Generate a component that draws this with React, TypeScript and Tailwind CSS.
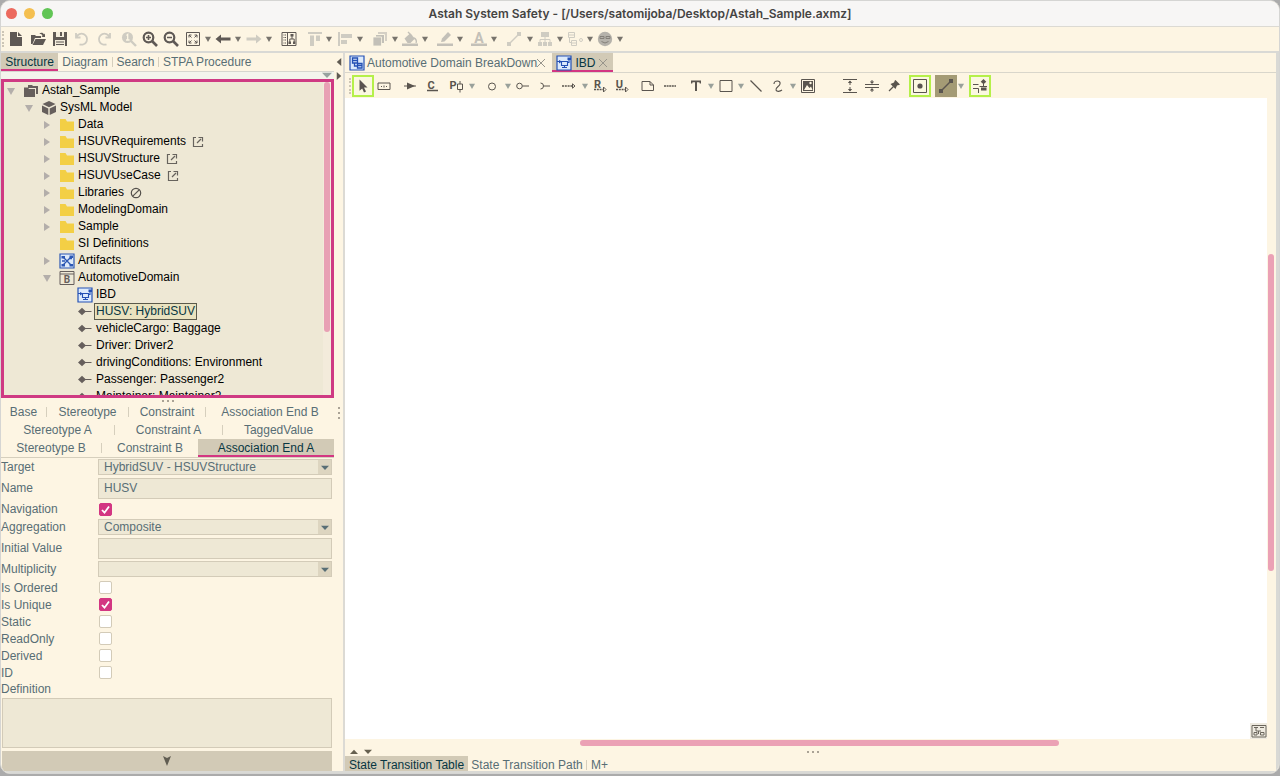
import React from "react";

type IconName = keyof typeof shapes;

interface Tool {
  icon: IconName;
  label: string;
  cls?: string;
  menu?: boolean;
}

interface TreeNode {
  label: string;
  icon: IconName;
  depth: number;
  arrow?: "open" | "closed";
  mark?: "external" | "blocked";
  selected?: boolean;
}

const letter = {
  fontFamily: "Roboto, sans-serif",
  fontWeight: 700,
  fill: "currentColor",
  textAnchor: "middle" as const,
};

const line = { fill: "none", stroke: "currentColor" };

const shapes = {
  newFile: (
    <>
      <path d="M2 1h7v5h5v9H2z" fill="currentColor" />
      <path d="M10 1l4 4h-4z" fill="currentColor" />
    </>
  ),
  open: (
    <>
      <path d="M1 13V4h4l1 1h5v2H5L2.500 13z" fill="currentColor" />
      <path d="M5.500 8H16l-3 6H2.500z" fill="currentColor" />
      <path d="M9 3c2-2 4-1.500 5 .5l1-1V6h-3.500l1-1C12 3.500 10.500 2.500 9 3z" fill="currentColor" />
    </>
  ),
  save: (
    <>
      <path d="M1 1h14v14H1z" fill="currentColor" />
      <path d="M4 1h8v5H4zM3 9h10v6H3z" fill="#f3ecdc" />
      <path d="M8 1h2v4H8zM4 10.500h8v1H4zM4 13h8v1H4z" fill="currentColor" />
    </>
  ),
  undo: <path d="M2 2v4.500h4.500M2.500 6a5.500 5.500 0 1 1 3 7.300" {...line} strokeWidth="1.800" />,
  redo: <path d="M14 2v4.500H9.500M13.500 6a5.500 5.500 0 1 0-3 7.300" {...line} strokeWidth="1.800" />,
  zoomOne: (
    <>
      <circle cx="6.500" cy="6.500" r="5.500" fill="currentColor" />
      <path d="M10 10l5 5" {...line} strokeWidth="2.400" />
      <path d="M5.500 4.500l1.200-1v5.500M5 9h3.500" fill="none" stroke="#fdf6e3" strokeWidth="1.300" />
    </>
  ),
  zoomIn: (
    <>
      <circle cx="6.500" cy="6.500" r="4.800" {...line} strokeWidth="2.200" />
      <path d="M10 10l5 5" {...line} strokeWidth="2.600" />
      <path d="M6.500 4v5M4 6.500h5" {...line} strokeWidth="1.600" />
    </>
  ),
  zoomOut: (
    <>
      <circle cx="6.500" cy="6.500" r="4.800" {...line} strokeWidth="2.200" />
      <path d="M10 10l5 5" {...line} strokeWidth="2.600" />
      <path d="M4 6.500h5" {...line} strokeWidth="1.600" />
    </>
  ),
  fit: (
    <>
      <path d="M1.500 1.500h13v13h-13z" {...line} />
      <path d="M4 6.500V4h2.500M9.500 4H12v2.500M12 9.500V12H9.500M6.500 12H4V9.500M4 4l2.500 2.500M12 4L9.500 6.500M12 12L9.500 9.500M4 12l2.500-2.500" {...line} />
    </>
  ),
  back: <path d="M.5 8L6 3.500v3h9.500v3H6v3z" fill="currentColor" />,
  forward: <path d="M15.500 8L10 3.500v3H.5v3H10v3z" fill="currentColor" />,
  structure: (
    <>
      <path d="M1 1.500h14v13H1zM6.500 1.500v13" {...line} />
      <path d="M2.500 4h2.500M2.500 6.500h2.500M2.500 9h2.500M2.500 12h2.500" {...line} strokeDasharray="1 .5" />
      <path d="M11 5v3M8.800 11V8h4.400v3" {...line} />
      <path d="M9.500 3h3v2.500h-3zM7.500 10.500H10V13H7.500zM12 10.500h2.300V13H12z" fill="currentColor" />
    </>
  ),
  alignTop: <path d="M1 1h14v2H1zM3 4.500h4v10.500H3zM9 4.500h4V10H9z" fill="currentColor" />,
  alignLeft: <path d="M1 1h2v14H1zM4 3h11v4H4zM4 9h6v4H4z" fill="currentColor" />,
  stack: (
    <>
      <path d="M6 1h9v9H6z" fill="currentColor" opacity=".7" />
      <path d="M3.500 3.500h9v9h-9z" fill="currentColor" stroke="#fdf6e3" />
      <path d="M1 6h8.500v9H1z" fill="currentColor" stroke="#fdf6e3" strokeWidth=".8" />
    </>
  ),
  fill: (
    <>
      <path d="M2.500 7.500l5.500-5 5 5-4.500 4.500H5.500z" fill="currentColor" />
      <path d="M6 1l4 4M12 7c2 1 3 3 2 5" {...line} strokeWidth="1.400" />
      <path d="M0 12.500h16V15H0z" fill="currentColor" />
    </>
  ),
  pen: (
    <>
      <path d="M4 11l1-3.500L11 1l3 3-6.500 6.500z" fill="currentColor" />
      <path d="M0 12.500h16V15H0z" fill="currentColor" />
    </>
  ),
  fontColor: (
    <>
      <text x="8" y="11.500" fontSize="14" {...letter}>A</text>
      <path d="M0 12.500h16V15H0z" fill="currentColor" />
    </>
  ),
  lineStyle: (
    <>
      <path d="M3 13L13 3" {...line} strokeWidth="1.400" />
      <path d="M1 11h4v4H1zM11 1h4v4h-4z" fill="currentColor" />
    </>
  ),
  orgTree: (
    <>
      <path d="M8 6v3M3 11V8.500h10V11M8 8v3" {...line} />
      <path d="M4 1h8v5H4zM1 11h4v4H1zM6 11h4v4H6zM11 11h4v4h-4z" fill="currentColor" />
    </>
  ),
  compartments: (
    <>
      <path d="M1.500 1.500h6v5h-6zM1.500 4h6M4.500 9.500h5v5h-5zM4.500 12h5M2.500 6.500v5h2" {...line} />
      <circle cx="14" cy="9" r="1.500" {...line} />
    </>
  ),
  smile: (
    <>
      <circle cx="8" cy="8" r="7.200" fill="currentColor" />
      <path d="M3 5.500h4v2H3zM9 5.500h4v2H9zM4.500 10.500q3.500 3 7 0" fill="none" stroke="#84807a" />
    </>
  ),
  pointer: <path d="M4.500 1.500l8 8H9l2 4-2 1-1.800-4-2.700 2.300z" fill="currentColor" />,
  block: <path d="M2 5h12v6.500H2zM5.500 8v1M8 7.500v2M10.500 8v1" {...line} />,
  flow: (
    <>
      <path d="M2 8h12" {...line} />
      <path d="M5 4.500L13 8l-8 3.500z" fill="currentColor" />
    </>
  ),
  constraint: (
    <>
      <text x="7" y="10.500" fontSize="11" {...letter}>C</text>
      <path d="M3 12.500h11" {...line} strokeWidth="1.300" />
    </>
  ),
  port: (
    <>
      <text x="4" y="10.500" fontSize="11" {...letter}>P</text>
      <path d="M8.500 6h5v5.500h-5zM11 3v3M11 11.500v3" {...line} />
    </>
  ),
  circle: <circle cx="8" cy="8.500" r="3.500" {...line} />,
  provided: (
    <>
      <circle cx="4.500" cy="8" r="2.800" {...line} />
      <path d="M7.500 8H14" {...line} />
    </>
  ),
  required: <path d="M3.500 5q3 0 3 3t-3 3M6.500 8H13" {...line} />,
  dashArrow: (
    <>
      <path d="M1 8h10" {...line} strokeWidth="1.400" strokeDasharray="2 .8" />
      <path d="M11.500 5.800L14 8l-2.500 2.200z" {...line} />
    </>
  ),
  realize: (
    <>
      <text x="5.500" y="9.500" fontSize="11" {...letter}>R</text>
      <path d="M2 11.500h9" {...line} strokeWidth="1.400" strokeDasharray="2 .8" />
      <path d="M11.500 9l2.500 2.500-2.500 2.500z" {...line} />
    </>
  ),
  usage: (
    <>
      <text x="5.500" y="9.500" fontSize="11" {...letter}>U</text>
      <path d="M2 11.500h9" {...line} strokeWidth="1.400" strokeDasharray="2 .8" />
      <path d="M11.500 9l2.500 2.500-2.500 2.500z" {...line} />
    </>
  ),
  note: <path d="M2 3.500h8l3.500 3.500v5.500H2zM10 3.500V7h3.500" {...line} />,
  anchor: <path d="M2 8h12" {...line} strokeWidth="1.500" strokeDasharray="2 .6" />,
  text: <path d="M3 2.500h10v3h-1.200l-.4-1.200H9V13H7V4.300H4.600l-.4 1.200H3z" fill="currentColor" />,
  rect: <path d="M2 2.500h12v11H2z" {...line} />,
  line: <path d="M2.500 2.500l11 11" {...line} strokeWidth="1.200" />,
  curve: <path d="M4 6c0-4 7-4 6 0-.5 2.500-5 3.500-4 6 .8 2 4 1.500 6 0" {...line} strokeWidth="1.200" />,
  image: (
    <>
      <path d="M1.500 1.500h13v13h-13z" {...line} />
      <path d="M3 3h10v10H3z" fill="currentColor" />
      <path d="M4 12l3-5 2.500 3L11 8.500l1.500 3.500z" fill="#fdf6e3" />
      <circle cx="10.500" cy="5" r="1.200" fill="#fdf6e3" />
    </>
  ),
  expand: (
    <>
      <path d="M1 1.500h14M1 14.500h14M8 3v4M8 9v4" {...line} />
      <path d="M8 2.500L5.800 5h4.400zM8 13.500L5.800 11h4.400z" fill="currentColor" />
    </>
  ),
  compress: (
    <>
      <path d="M1 6.500h14M1 9.500h14M8 2v3M8 11v3" {...line} />
      <path d="M8 6L5.800 3.500h4.400zM8 10l-2.200 2.500h4.400z" fill="currentColor" />
    </>
  ),
  pin: (
    <>
      <path d="M9.500 2l4.500 4.500-1 .5-2 .5-1.500 3.500-5-5L8 4.500l.8-2z" fill="currentColor" />
      <path d="M7.500 8.500L3 13" {...line} strokeWidth="1.200" />
    </>
  ),
  target: (
    <>
      <path d="M1.500 1.500h13v13h-13z" {...line} />
      <circle cx="8" cy="8" r="2.600" fill="currentColor" />
    </>
  ),
  connector: (
    <>
      <path d="M3 13L13 3" {...line} strokeWidth="1.500" />
      <path d="M1 11h4v4H1zM11 1h4v4h-4z" fill="currentColor" />
    </>
  ),
  layout: (
    <>
      <path d="M1 6.500h5.500M1 10.500h5.500V15M7.500 8.500H15M11.500 5v4" {...line} />
      <path d="M9 9.500h5.500v3H9zM11.500 1l2.800 2.800-2.800 2.400-2.800-2.400z" fill="currentColor" />
    </>
  ),
  project: (
    <>
      <path d="M5 2h4l1 1h5v8h-2V5H5z" fill="currentColor" />
      <path d="M1 4.500h4l1 1.500h6v8H1z" fill="currentColor" />
    </>
  ),
  model: (
    <>
      <path d="M8 1l6.500 3L8 7.200 1.500 4z" fill="currentColor" />
      <path d="M1 5.500l6.300 3V15L1 12zM15 5.500l-6.300 3V15L15 12z" fill="currentColor" />
    </>
  ),
  folder: <path d="M1 2h5.500l1.500 2.500h7V14H1z" fill="#f3cf45" />,
  artifacts: (
    <>
      <path d="M1 1h14v14H1z" fill="#dfeaf8" stroke="#2c57b4" strokeWidth="1.200" />
      <path d="M3.500 3.500l9 9M12.500 3.500l-9 9M3 8h3M10 5.500h3" stroke="#2c57b4" strokeWidth="1.300" />
      <path d="M2.500 3H6v2.500H2.500zM10.500 2.500H14V5h-3.500zM2.500 11H6v2.500H2.500zM10.500 11H14v2.500h-3.500z" fill="#2c57b4" />
    </>
  ),
  blockDef: (
    <>
      <path d="M1 1.500h14v13H1zM1 4h14" {...line} />
      <text x="8" y="13" fontSize="10" {...letter}>B</text>
    </>
  ),
  ibd: (
    <>
      <path d="M1 1h14v14H1z" fill="#dceafc" stroke="#2450b4" strokeWidth="1.200" />
      <path d="M5.500 6.500h6v4h-6zM1 6.500h2.500M8.500 10.500v2M11.500 7.500h1.500V4M6 12.500h5" fill="none" stroke="#2450b4" strokeWidth="1.100" />
      <path d="M3 5l3 1.500L3 8.500zM11.500 2.500H15V5h-3.500z" fill="#2450b4" />
    </>
  ),
  bdd: (
    <>
      <path d="M1 1h14v14H1z" fill="#dceafc" stroke="#2450b4" strokeWidth="1.200" />
      <path d="M3.500 3h5v5h-5zM8.500 8.500H13V13H8.500zM3.500 5.500h5M8.500 10.500H13M5.500 8v3h3" fill="none" stroke="#2450b4" strokeWidth="1.300" />
    </>
  ),
  part: (
    <>
      <path d="M1 7.500l4-3.800 4 3.800-4 3.800z" fill="currentColor" />
      <path d="M8 7.500h6.500" {...line} />
    </>
  ),
  overview: (
    <>
      <path d="M1 2.500h14v11.500H1z" {...line} />
      <path d="M3 4.500h4M9 4.500h4M5 4.500V8h5M7.500 8v3M3 9.500h3V12H3zM9.500 9.500h3.500V12H9.500z" {...line} />
    </>
  ),
};

const mainTools: Tool[] = [
  { icon: "newFile", label: "New", cls: "w-[22px] text-[#5f5955]" },
  { icon: "open", label: "Open", cls: "w-[22px] text-[#5f5955]" },
  { icon: "save", label: "Save", cls: "w-[22px] text-[#5f5955]" },
  { icon: "undo", label: "Undo", cls: "w-[22px] text-[#cfccc2]" },
  { icon: "redo", label: "Redo", cls: "w-[21px] text-[#cfccc2]" },
  { icon: "zoomOne", label: "Actual size", cls: "w-[22px] ml-1 text-[#cfccc2]" },
  { icon: "zoomIn", label: "Zoom in", cls: "w-[20px] text-[#5f5955]" },
  { icon: "zoomOut", label: "Zoom out", cls: "w-[22px] text-[#5f5955]" },
  { icon: "fit", label: "Fit in window", cls: "w-[22px] text-[#5f5955]", menu: true },
  { icon: "back", label: "Back", cls: "w-[22px] text-[#5f5955]", menu: true },
  { icon: "forward", label: "Forward", cls: "w-[23px] text-[#cfccc2]", menu: true },
  { icon: "structure", label: "Show in structure tree", cls: "w-[24px] mx-1 text-[#5f5955]" },
  { icon: "alignTop", label: "Align top", cls: "w-[20px] text-[#cfccc2]", menu: true },
  { icon: "alignLeft", label: "Align left", cls: "w-[23px] text-[#cfccc2]", menu: true },
  { icon: "stack", label: "Order", cls: "w-[23px] ml-1 text-[#c3c0b8]", menu: true },
  { icon: "fill", label: "Fill color", cls: "w-[22px] text-[#c3c0b8]", menu: true },
  { icon: "pen", label: "Line color", cls: "w-[23px] ml-1 text-[#c3c0b8]", menu: true },
  { icon: "fontColor", label: "Font color", cls: "w-[22px] ml-1 text-[#c3c0b8]", menu: true },
  { icon: "lineStyle", label: "Line style", cls: "w-[24px] ml-1 text-[#cfccc2]", menu: true },
  { icon: "orgTree", label: "Auto layout", cls: "w-[22px] text-[#cfccc2]", menu: true },
  { icon: "compartments", label: "Compartments", cls: "w-[22px] text-[#cfccc2]", menu: true },
  { icon: "smile", label: "Icon", cls: "w-[22px] text-[#b5b2ab]", menu: true },
];

const lit = "border-2 border-[#b5f04a] bg-[#fbf8e0]";

const diagramTools: Tool[] = [
  { icon: "pointer", label: "Select", cls: `w-[22px] ${lit}` },
  { icon: "block", label: "Part", cls: "w-[20px]" },
  { icon: "flow", label: "Item flow", cls: "w-[24px] ml-1" },
  { icon: "constraint", label: "Constraint", cls: "w-[20px]" },
  { icon: "port", label: "Port", cls: "w-[22px] ml-1", menu: true },
  { icon: "circle", label: "Interface", cls: "w-[24px] ml-1", menu: true },
  { icon: "provided", label: "Provided interface", cls: "w-[22px]" },
  { icon: "required", label: "Required interface", cls: "w-[22px]" },
  { icon: "dashArrow", label: "Dependency", cls: "w-[25px]", menu: true },
  { icon: "realize", label: "Realization", cls: "w-[22px]" },
  { icon: "usage", label: "Usage", cls: "w-[22px]" },
  { icon: "note", label: "Note", cls: "w-[22px] ml-1" },
  { icon: "anchor", label: "Note anchor", cls: "w-[22px]" },
  { icon: "text", label: "Text", cls: "w-[22px] ml-1", menu: true },
  { icon: "rect", label: "Rectangle", cls: "w-[22px]", menu: true },
  { icon: "line", label: "Line", cls: "w-[22px]" },
  { icon: "curve", label: "Freehand", cls: "w-[22px]", menu: true },
  { icon: "image", label: "Image", cls: "w-[22px]" },
  { icon: "expand", label: "Expand vertically", cls: "w-[22px] ml-5" },
  { icon: "compress", label: "Compress vertically", cls: "w-[22px]" },
  { icon: "pin", label: "Lock selection", cls: "w-[22px]" },
  { icon: "target", label: "Center", cls: `w-[22px] ml-1 ${lit}` },
  { icon: "connector", label: "Connector style", cls: "w-[22px] ml-1 bg-[#a49b75]", menu: true },
  { icon: "layout", label: "Adjust layout", cls: `w-[22px] ml-1 ${lit}` },
];

const tree: TreeNode[] = [
  { label: "Astah_Sample", icon: "project", depth: 0, arrow: "open" },
  { label: "SysML Model", icon: "model", depth: 1, arrow: "open" },
  { label: "Data", icon: "folder", depth: 2, arrow: "closed" },
  { label: "HSUVRequirements", icon: "folder", depth: 2, arrow: "closed", mark: "external" },
  { label: "HSUVStructure", icon: "folder", depth: 2, arrow: "closed", mark: "external" },
  { label: "HSUVUseCase", icon: "folder", depth: 2, arrow: "closed", mark: "external" },
  { label: "Libraries", icon: "folder", depth: 2, arrow: "closed", mark: "blocked" },
  { label: "ModelingDomain", icon: "folder", depth: 2, arrow: "closed" },
  { label: "Sample", icon: "folder", depth: 2, arrow: "closed" },
  { label: "SI Definitions", icon: "folder", depth: 2 },
  { label: "Artifacts", icon: "artifacts", depth: 2, arrow: "closed" },
  { label: "AutomotiveDomain", icon: "blockDef", depth: 2, arrow: "open" },
  { label: "IBD", icon: "ibd", depth: 3 },
  { label: "HUSV: HybridSUV", icon: "part", depth: 3, selected: true },
  { label: "vehicleCargo: Baggage", icon: "part", depth: 3 },
  { label: "Driver: Driver2", icon: "part", depth: 3 },
  { label: "drivingConditions: Environment", icon: "part", depth: 3 },
  { label: "Passenger: Passenger2", icon: "part", depth: 3 },
  { label: "Maintainer: Maintainer2", icon: "part", depth: 3 },
];

const indents = ["pl-[3px]", "pl-[21px]", "pl-[39px]", "pl-[57px]"];

// underline drawn as a shadow so it does not push the tab text up
const activeTab = "bg-[#d2cab6] text-[#073642] shadow-[inset_0_-2px_0_#d33682]";

const flags = [
  { label: "Is Ordered", on: false },
  { label: "Is Unique", on: true },
  { label: "Static", on: false },
  { label: "ReadOnly", on: false },
  { label: "Derived", on: false },
  { label: "ID", on: false },
];

function Icon({ name, className = "size-4" }: { name: IconName; className?: string }) {
  return (
    <svg viewBox="0 0 16 16" className={`${className} shrink-0`} aria-hidden="true">
      {shapes[name]}
    </svg>
  );
}

function Triangle({ dir, className }: { dir: "up" | "down" | "left" | "right"; className: string }) {
  const d = {
    up: "M0 8L4 1l4 7z",
    down: "M0 1h8L4 8z",
    left: "M7 0v8L1 4z",
    right: "M1 0v8l6-4z",
  };
  return (
    <svg viewBox="0 0 8 8" preserveAspectRatio="none" className={`shrink-0 ${className}`} aria-hidden="true">
      <path d={d[dir]} fill="currentColor" />
    </svg>
  );
}

function Cross() {
  return (
    <svg viewBox="0 0 8 8" className="size-2 shrink-0 text-[#98958c]" aria-hidden="true">
      <path d="M0 0l8 8M8 0L0 8" {...line} />
    </svg>
  );
}

function Dots({ vertical = false }: { vertical?: boolean }) {
  return (
    <span className={`flex ${vertical ? "flex-col gap-[3px]" : "gap-[3px]"}`}>
      {[0, 1, 2].map((i) => (
        <i key={i} className="size-[2px] bg-[#aaa396]" />
      ))}
    </span>
  );
}

function Toolbar({ tools, label, arrow }: { tools: Tool[]; label: string; arrow: string }) {
  return (
    <div role="toolbar" aria-label={label} className="flex items-center">
      <span className="mx-px h-4 border-l-2 border-dotted border-[#cdc6b6]" />
      {tools.map((t) => (
        <React.Fragment key={t.icon}>
          <button aria-label={t.label} className={`flex h-[22px] shrink-0 items-center justify-center ${t.cls}`}>
            <Icon name={t.icon} />
          </button>
          {t.menu && (
            <button aria-label={`${t.label} options`} className={`flex w-2 shrink-0 justify-center ${arrow}`}>
              <Triangle dir="down" className="size-[6px]" />
            </button>
          )}
        </React.Fragment>
      ))}
    </div>
  );
}

function TreeRow({ node }: { node: TreeNode }) {
  return (
    <li className={`flex h-[17px] items-center ${indents[node.depth]}`}>
      <span className="flex w-4 shrink-0 items-center text-[#b3aeaa]">
        {node.arrow === "open" && <Triangle dir="down" className="size-2" />}
        {node.arrow === "closed" && <Triangle dir="right" className="size-2" />}
      </span>
      <span className="flex text-[#665f5c]">
        <Icon name={node.icon} />
      </span>
      <span
        className={`ml-px whitespace-nowrap border px-px leading-[15px] ${
          node.selected ? "border-[#5b5a4b] bg-[#e9e2bf] text-[#073642]" : "border-transparent"
        }`}
      >
        {node.label}
      </span>
      {node.mark === "external" && (
        <svg viewBox="0 0 12 12" className="ml-1 size-3 text-[#67635d]" aria-hidden="true">
          <path d="M4 1.500H1.500v9H10.500V8M5 7l4-4M6.500 1.500h4v4" {...line} strokeWidth="1.200" />
        </svg>
      )}
      {node.mark === "blocked" && (
        <svg viewBox="0 0 12 12" className="ml-1 size-3 text-[#56524d]" aria-hidden="true">
          <circle cx="6" cy="6" r="4.700" {...line} strokeWidth="1.200" />
          <path d="M2.800 9.200l6.400-6.400" {...line} strokeWidth="1.200" />
        </svg>
      )}
    </li>
  );
}

function SelectRow({ id, label, value }: { id: string; label: string; value: string }) {
  return (
    <div className="flex h-[18px] items-center">
      <label htmlFor={id} className="w-[97px] shrink-0">{label}</label>
      <div className="relative flex-1">
        <select
          id={id}
          className="block h-4 w-full appearance-none border border-[#d3cbb8] bg-[#eee8d5] pl-[5px] pr-4 leading-[14px] outline-none"
        >
          <option>{value}</option>
        </select>
        <span className="pointer-events-none absolute inset-y-px right-px flex w-[13px] items-center justify-center bg-[#ddd5c0] text-[#586e75]">
          <Triangle dir="down" className="h-[5px] w-2" />
        </span>
      </div>
    </div>
  );
}

function InputRow({ id, label, value }: { id: string; label: string; value: string }) {
  return (
    <div className="flex h-6 items-center">
      <label htmlFor={id} className="w-[97px] shrink-0">{label}</label>
      <input
        id={id}
        defaultValue={value}
        className="h-[21px] min-w-0 flex-1 border border-[#d3cbb8] bg-[#eee8d5] px-[5px] outline-none"
      />
    </div>
  );
}

function CheckRow({ label, on, className }: { label: string; on: boolean; className: string }) {
  return (
    <label className={`flex items-center ${className}`}>
      <span className="w-[98px]">{label}</span>
      <span className="grid">
        <input
          type="checkbox"
          defaultChecked={on}
          className="peer col-start-1 row-start-1 size-[13px] appearance-none rounded-xs border border-[#d3cbb8] bg-white checked:border-[#d33682] checked:bg-[#d33682]"
        />
        <svg viewBox="0 0 13 13" className="invisible col-start-1 row-start-1 size-[13px] peer-checked:visible" aria-hidden="true">
          <path d="M3 7l2.500 2.700L10 3.500" fill="none" stroke="#fff" strokeWidth="1.800" />
        </svg>
      </span>
    </label>
  );
}

function PropertyTabs() {
  const tab = "flex items-center justify-center whitespace-nowrap";
  const bar = <i className="h-[10px] w-px self-center bg-[#d6cfbd]" />;
  return (
    <div role="tablist" className="shrink-0 border-b border-[#d6cfbd]">
      <div className="flex h-[18px]">
        <button role="tab" className={`${tab} w-[45px]`}>Base</button>
        {bar}
        <button role="tab" className={`${tab} w-[81px]`}>Stereotype</button>
        {bar}
        <button role="tab" className={`${tab} w-[76px]`}>Constraint</button>
        {bar}
        <button role="tab" className={`${tab} flex-1`}>Association End B</button>
      </div>
      <div className="flex h-[18px]">
        <button role="tab" className={`${tab} w-[113px]`}>Stereotype A</button>
        {bar}
        <button role="tab" className={`${tab} w-[107px]`}>Constraint A</button>
        {bar}
        <button role="tab" className={`${tab} flex-1`}>TaggedValue</button>
      </div>
      <div className="flex h-[18px]">
        <button role="tab" className={`${tab} w-[100px]`}>Stereotype B</button>
        {bar}
        <button role="tab" className={`${tab} w-[96px]`}>Constraint B</button>
        <button role="tab" aria-selected="true" className={`${tab} flex-1 ${activeTab}`}>
          Association End A
        </button>
      </div>
    </div>
  );
}

function Sidebar() {
  return (
    <div className="flex w-[333px] shrink-0 flex-col">
      <div role="tablist" className="flex h-[19px] shrink-0 items-stretch border-b border-[#d6d6ce]">
        <button role="tab" aria-selected="true" className={`w-[57px] ${activeTab}`}>
          Structure
        </button>
        <button role="tab" className="w-[54px]">Diagram</button>
        <i className="my-1 w-px bg-[#d6cfbd]" />
        <button role="tab" className="w-[45px]">Search</button>
        <i className="my-1 w-px bg-[#d6cfbd]" />
        <button role="tab" className="px-1">STPA Procedure</button>
      </div>
      <div className="flex h-[7px] shrink-0 justify-end bg-[#f3f4ec] pr-[2px] text-[#98a3a0]">
        <Triangle dir="down" className="h-[6px] w-[10px]" />
      </div>

      <div className="flex min-h-0 flex-1 border-[3px] border-[#cf3a83] bg-[#eee8d5]">
        <ul className="min-w-0 flex-1 overflow-hidden text-black">
          {tree.map((node) => (
            <TreeRow key={node.label} node={node} />
          ))}
        </ul>
        <div className="w-[8px] bg-[#f3ebdb] px-px">
          <div className="h-4/5 rounded-full bg-[#e8a0b4]" />
        </div>
      </div>

      <div className="flex h-[5px] shrink-0 items-center justify-center">
        <Dots />
      </div>
      <PropertyTabs />

      <form className="shrink-0 pr-[2px]">
        <SelectRow id="target" label="Target" value="HybridSUV - HSUVStructure" />
        <InputRow id="name" label="Name" value="HUSV" />
        <CheckRow label="Navigation" on className="h-[18px]" />
        <SelectRow id="aggregation" label="Aggregation" value="Composite" />
        <InputRow id="initial" label="Initial Value" value="" />
        <SelectRow id="multiplicity" label="Multiplicity" value="" />
        <div className="pt-px">
          {flags.map((f) => (
            <CheckRow key={f.label} label={f.label} on={f.on} className="h-[17px]" />
          ))}
        </div>
        <label htmlFor="definition" className="block leading-4">Definition</label>
        <div className="pl-px">
          <textarea
            id="definition"
            className="mt-px block h-[50px] w-full resize-none border border-[#d3cbb8] bg-[#eee8d5] outline-none"
          />
          <button type="button" aria-label="Collapse" className="mt-[3px] flex h-5 w-full items-center justify-center bg-[#d2cab6] text-[#615d52]">
            <svg viewBox="0 0 8 10" className="h-[10px] w-2" aria-hidden="true">
              <path d="M0 0l4 2 4-2-4 10z" fill="currentColor" />
            </svg>
          </button>
        </div>
      </form>
    </div>
  );
}

function Editor() {
  return (
    <main className="flex min-w-0 flex-1 flex-col">
      <div role="tablist" className="flex h-5 shrink-0 border-b border-[#d9d6cb] pl-1">
        <button role="tab" className="flex w-[203px] items-center justify-between whitespace-nowrap pr-2">
          <span className="flex items-center gap-[2px]">
            <Icon name="bdd" />
            Automotive Domain BreakDown
          </span>
          <Cross />
        </button>
        <button role="tab" aria-selected="true" className={`flex w-[61px] items-center justify-between pl-1 pr-[6px] ${activeTab}`}>
          <Icon name="ibd" />
          IBD
          <Cross />
        </button>
      </div>
      <div className="flex h-[25px] shrink-0 items-center pl-[3px] text-[#5a554f]">
        <Toolbar tools={diagramTools} label="Diagram tools" arrow="text-[#99a09a]" />
      </div>

      <div className="flex min-h-0 flex-1">
        <div className="relative min-w-0 flex-1 bg-white">
          <button aria-label="Overview map" className="absolute bottom-0 right-0 bg-[#eeeae0] pl-px text-[#6b665c]">
            <Icon name="overview" />
          </button>
        </div>
        <div className="flex w-[9px] flex-col px-px">
          <div className="flex-[156]" />
          <div className="w-[6px] flex-[317] rounded-full bg-[#eba1b5]" />
          <div className="flex-[168]" />
        </div>
      </div>
      <div className="flex h-2 shrink-0 py-px">
        <div className="flex-[235]" />
        <div className="flex-[479] rounded-full bg-[#eba1b5]" />
        <div className="flex-[217]" />
      </div>
      <div className="flex h-[9px] shrink-0 items-center text-[#66604f]">
        <span className="flex flex-1 gap-[6px] pl-[5px]">
          <Triangle dir="up" className="h-[5px] w-2" />
          <Triangle dir="down" className="h-[5px] w-2" />
        </span>
        <Dots />
        <span className="flex-1" />
      </div>
      <div role="tablist" className="flex h-[15px] shrink-0 whitespace-nowrap leading-[12px]">
        <button role="tab" aria-selected="true" className="w-[123px] bg-[#d2cab6] pt-[3px] text-[#073642]">State Transition Table</button>
        <button role="tab" className="w-[118px] pt-[3px]">State Transition Path</button>
        <i className="mt-1 h-[10px] w-px bg-[#d6cfbd]" />
        <button role="tab" className="px-1 pt-[3px]">M+</button>
      </div>
    </main>
  );
}

export default function App() {
  return (
    <div className="h-screen bg-[#ababab] pb-[2px] font-['Liberation_Sans',Arial,sans-serif] text-[12px] leading-4 text-[#586e75]">
      <div className="flex h-full flex-col overflow-hidden rounded-[10px] border border-[#d5d5d3] bg-[#fdf5e3]">
        <header className="flex h-[26px] shrink-0 items-center border-b border-[#dcdad3] bg-[#f7f6f5] px-[5px]">
          <div className="flex flex-1 gap-[7px]">
            <button aria-label="Close" className="size-[11px] rounded-full bg-[#ec6a5e]" />
            <button aria-label="Minimize" className="size-[11px] rounded-full bg-[#f4bf50]" />
            <button aria-label="Zoom" className="size-[11px] rounded-full bg-[#61c555]" />
          </div>
          <h1 className="whitespace-nowrap font-[Inter,sans-serif] text-[12px] font-semibold text-[#454443]">
            Astah System Safety - [/Users/satomijoba/Desktop/Astah_Sample.axmz]
          </h1>
          <div className="flex-1" />
        </header>
        <div className="flex h-6 shrink-0 items-center">
          <Toolbar tools={mainTools} label="Main tools" arrow="text-[#77736c]" />
        </div>

        <div className="flex min-h-0 flex-1 border-b-2 border-r-[3px] border-t-2 border-[#d9d9d5]">
          <Sidebar />
          <div className="flex w-[11px] shrink-0 flex-col items-center border-r-2 border-[#dcdad4] text-[#5f5a52]">
            <div className="flex flex-1 flex-col items-center gap-[6px] pt-[5px]">
              <Triangle dir="left" className="h-2 w-[6px]" />
              <Triangle dir="right" className="h-2 w-[6px]" />
            </div>
            <div className="h-[364px] shrink-0">
              <Dots vertical />
            </div>
          </div>
          <Editor />
        </div>
      </div>
    </div>
  );
}
